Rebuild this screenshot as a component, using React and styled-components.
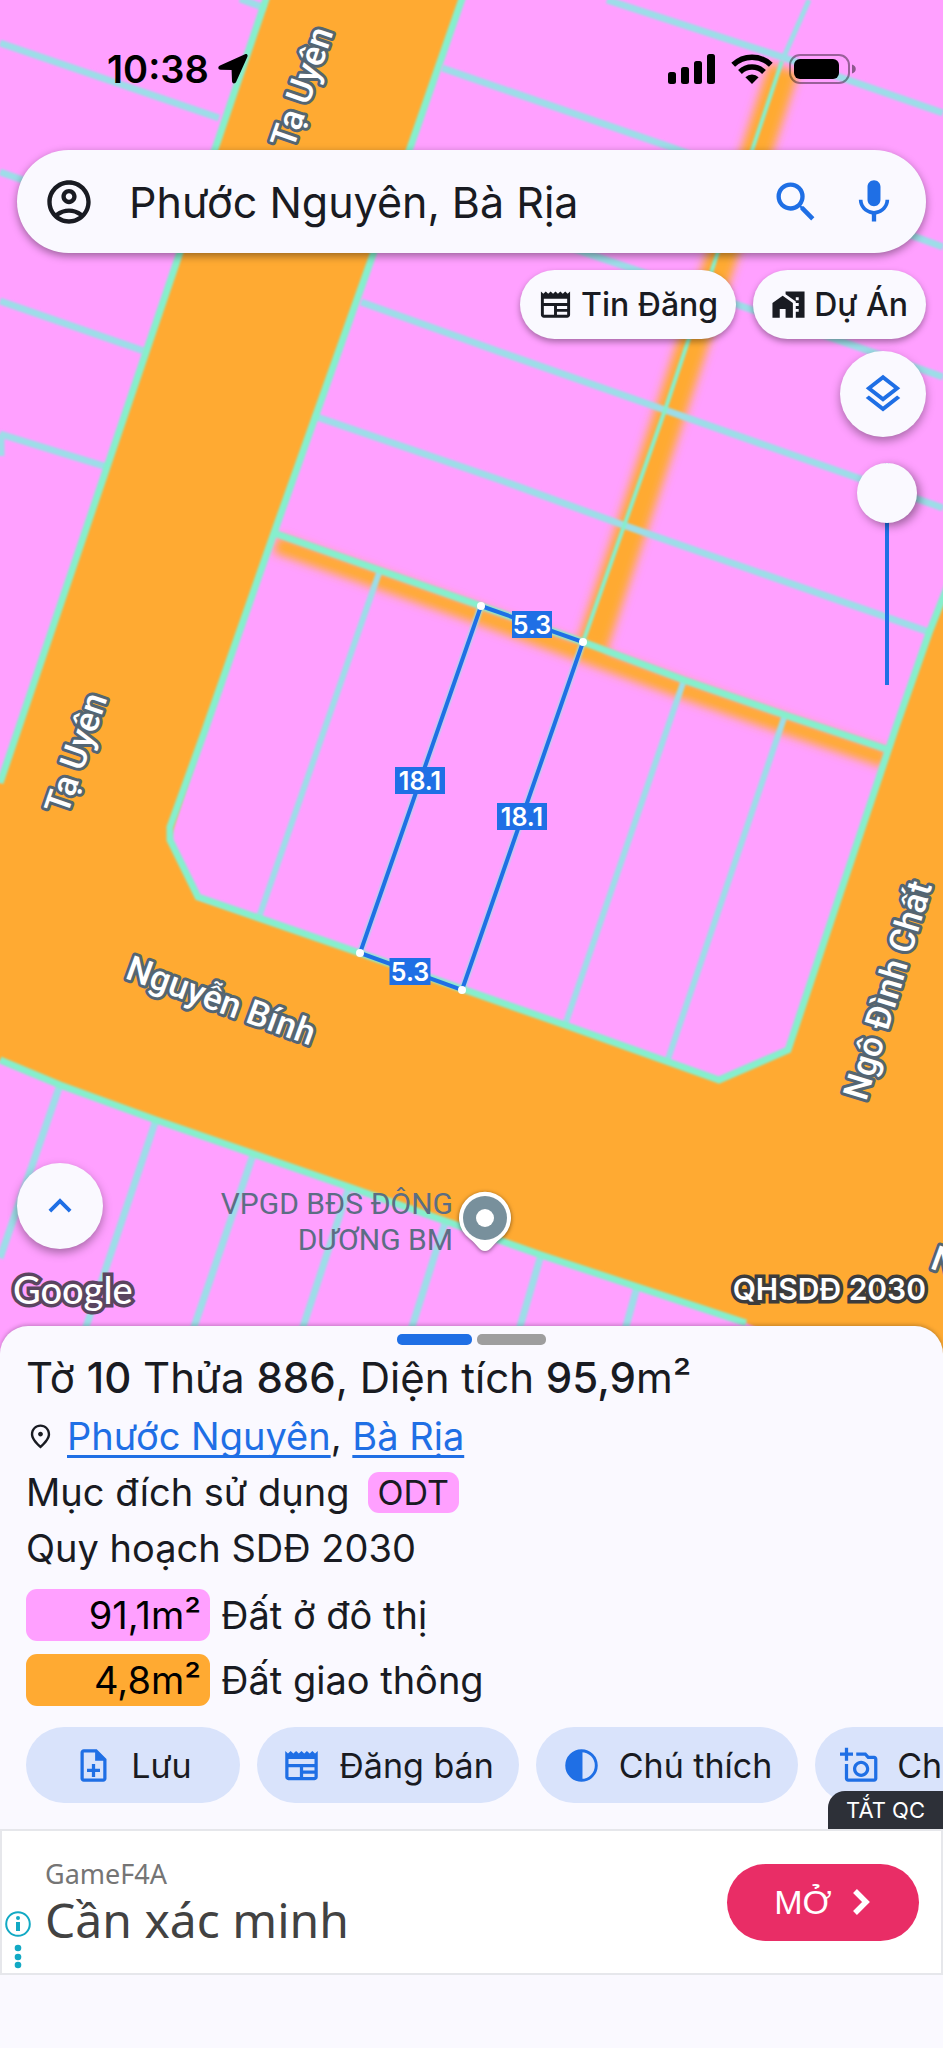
import React, { useState } from 'react';
import styled, { createGlobalStyle } from 'styled-components';
import {
  MdOutlineAccountCircle,
  MdSearch,
  MdMic,
  MdOutlineNewspaper,
  MdMapsHomeWork,
  MdOutlineLayers,
  MdKeyboardArrowUp,
  MdOutlinePlace,
  MdOutlineNoteAdd,
  MdOutlineAddAPhoto,
} from 'react-icons/md';

const colors = {
  surface: '#faf9ff',
  ink: '#191b22',
  blue: '#1f6fe5',
  pink: '#ffa0ff',
  orange: '#ffaa32',
  boundary: '#86efcd',
  parcel: '#9ddde8',
};

const GlobalStyle = createGlobalStyle`
  * {
    box-sizing: border-box;
  }

  body {
    margin: 0;
    background: ${colors.surface};
    color: ${colors.ink};
    font-family: Inter, 'Noto Sans', sans-serif;
    overflow-x: hidden;
  }

  button,
  input {
    font: inherit;
    color: inherit;
  }
`;

const Page = styled.div`
  display: flex;
  flex-direction: column;
  min-height: 100vh;
  overflow: hidden;
`;

/* Map */

const MapArea = styled.main`
  position: relative;
  flex: 1;
  display: flex;
  flex-direction: column;
  min-height: 1358px;
`;

const MapCanvas = styled.svg`
  position: absolute;
  inset: 0;
  width: 100%;
  height: 100%;
`;

const MapOverlay = styled.div`
  position: relative;
  flex: 1;
  display: flex;
  flex-direction: column;
  padding: 0 17px 44px;
`;

const StatusBar = styled.div`
  display: flex;
  align-items: center;
  justify-content: space-between;
  height: 138px;
  margin-bottom: 12px;
  padding: 0 69px 0 90px;
  color: #000;
`;

const StatusGroup = styled.div`
  display: flex;
  align-items: center;
  gap: ${({ $gap }) => $gap}px;
`;

const Clock = styled.span`
  font-size: 38px;
  font-weight: 600;
`;

const SearchBar = styled.form`
  display: flex;
  align-items: center;
  height: 103px;
  padding: 0 26px;
  border-radius: 52px;
  background: ${colors.surface};
  box-shadow: 0 3px 8px rgba(0, 0, 0, 0.4);
`;

const SearchInput = styled.input`
  flex: 1;
  min-width: 0;
  margin: 0 20px 0 34px;
  padding: 0;
  border: 0;
  outline: 0;
  background: transparent;
  font-size: 43px;
`;

const IconButton = styled.button`
  display: flex;
  padding: 0;
  border: 0;
  background: transparent;
  font-size: 52px;
  color: ${({ $blue }) => ($blue ? colors.blue : colors.ink)};

  & + & {
    margin-left: 26px;
  }
`;

const Chips = styled.div`
  display: flex;
  justify-content: flex-end;
  gap: 17px;
  margin: 17px 0 12px;
`;

const Chip = styled.button`
  display: flex;
  align-items: center;
  gap: 8px;
  height: 69px;
  padding: 0 18px;
  border: 0;
  border-radius: 35px;
  background: ${colors.surface};
  box-shadow: 0 3px 6px rgba(0, 0, 0, 0.35);
  font-size: 32px;
  font-weight: 500;

  svg {
    font-size: 35px;
  }
`;

const RoundButton = styled.button`
  display: flex;
  align-items: center;
  justify-content: center;
  width: 86px;
  height: 86px;
  padding: 0;
  border: 0;
  border-radius: 50%;
  background: ${colors.surface};
  box-shadow: 0 4px 10px rgba(0, 0, 0, 0.35);
  font-size: 46px;
  color: ${colors.blue};
`;

const MapTools = styled.div`
  display: flex;
  flex-direction: column;
  align-items: flex-end;
  gap: 26px;
`;

const OpacitySlider = styled.input`
  appearance: none;
  writing-mode: vertical-lr;
  direction: rtl;
  width: 60px;
  height: 222px;
  margin: 0 9px 0 0;
  background: linear-gradient(${colors.blue}, ${colors.blue}) center / 4px 100% no-repeat;

  &::-webkit-slider-thumb {
    appearance: none;
    width: 60px;
    height: 60px;
    border-radius: 50%;
    background: ${colors.surface};
    box-shadow: 3px 3px 10px rgba(0, 0, 0, 0.4);
  }
`;

const MapFooter = styled.div`
  margin-top: auto;
`;

const Attribution = styled.div`
  display: flex;
  align-items: center;
  justify-content: space-between;
  margin-top: 15px;
`;

const outline = (size, color) => `
  -webkit-text-stroke: ${size}px ${color};
  paint-order: stroke fill;
`;

const GoogleMark = styled.span`
  margin-left: -4px;
  color: #fff;
  font-family: Lato, sans-serif;
  font-size: 38px;
  font-weight: 500;
  line-height: 50px;
  ${outline(7, '#5a4560')}
`;

const LayerName = styled.span`
  color: #fff;
  font-size: 30px;
  font-weight: 600;
  ${outline(7, '#3c3c3c')}
`;

const StreetText = styled.text`
  fill: #fff;
  stroke: #546572;
  stroke-width: 6px;
  stroke-linejoin: round;
  paint-order: stroke;
  font-family: Roboto, sans-serif;
  font-size: 35px;
  font-weight: 500;
`;

const PlaceText = styled.text`
  fill: #5c6d84;
  font-family: Roboto, sans-serif;
  font-size: 30px;
  text-anchor: end;
`;

const LengthText = styled.text`
  fill: #fff;
  font-size: 25px;
  font-weight: 600;
  text-anchor: middle;
`;

/* Parcel sheet */

const Sheet = styled.section`
  position: relative;
  margin-top: -32px;
  padding: 8px 0 26px 26px;
  border-radius: 28px 28px 0 0;
  background: ${colors.surface};
  box-shadow: 0 -1px 4px rgba(0, 0, 0, 0.25);
`;

const Pager = styled.div`
  display: flex;
  justify-content: center;
  gap: 5px;
  margin: 0 0 3px -26px;
`;

const PagerDot = styled.span`
  width: ${({ $active }) => ($active ? 75 : 69)}px;
  height: 11px;
  border-radius: 5px;
  background: ${({ $active }) => ($active ? colors.blue : '#9e9e9e')};
`;

const Title = styled.h1`
  margin: 0;
  font-size: 42px;
  font-weight: 400;
  line-height: 60px;

  b {
    font-weight: 500;
  }
`;

const Line = styled.p`
  display: flex;
  align-items: center;
  margin: 0;
  font-size: 38px;
  line-height: 56px;
  white-space: pre;

  svg {
    margin-right: 12px;
    font-size: 29px;
  }
`;

const AreaLink = styled.a`
  color: ${colors.blue};
  text-decoration-thickness: 3px;
  text-underline-offset: 5px;
  text-decoration-skip-ink: none;
`;

const Badge = styled.span`
  margin-left: 18px;
  padding: 0 10px;
  border-radius: 11px;
  background: ${colors.pink};
  font-size: 34px;
  line-height: 41px;
`;

const LandUse = styled.dl`
  display: grid;
  grid-template-columns: 184px 1fr;
  gap: 13px 11px;
  margin: 13px 0 21px;
  font-size: 38px;
  line-height: 52px;
`;

const LandArea = styled.dt`
  padding-right: 9px;
  border-radius: 11px;
  background: ${({ $color }) => $color};
  color: #000;
  text-align: right;
`;

const LandName = styled.dd`
  margin: 0;
`;

const Actions = styled.div`
  display: flex;
  gap: 17px;
  overflow: hidden;
`;

const ActionButton = styled.button`
  flex: none;
  display: flex;
  align-items: center;
  justify-content: center;
  gap: 18px;
  width: ${({ $width }) => $width}px;
  height: 76px;
  padding: 0;
  border: 0;
  border-radius: 38px;
  background: #d9e3fb;
  font-size: 34px;

  svg {
    color: ${colors.blue};
    font-size: 39px;
  }
`;

/* Ad */

const AdBanner = styled.aside`
  position: relative;
  display: flex;
  align-items: center;
  height: 146px;
  margin-bottom: 73px;
  padding: 0 22px 0 3px;
  border: 2px solid #e6e7eb;
  background: #fff;
`;

const AdClose = styled.button`
  position: absolute;
  right: -2px;
  bottom: calc(100% + 2px);
  height: 38px;
  padding: 0 18px;
  border: 0;
  border-top-left-radius: 17px;
  background: #2d3038;
  color: #fff;
  font-size: 22px;
`;

const AdMarks = styled.svg`
  align-self: flex-end;
  width: 26px;
  height: 66px;
  margin-right: 14px;
`;

const AdText = styled.div`
  flex: 1;
  font-family: 'Noto Sans', sans-serif;
`;

const AdBrand = styled.div`
  color: #757575;
  font-size: 27px;
  line-height: 36px;
`;

const AdHeadline = styled.div`
  color: #424242;
  font-size: 48px;
  line-height: 56px;
`;

const AdAction = styled.button`
  display: flex;
  align-items: center;
  justify-content: center;
  gap: 20px;
  width: 192px;
  height: 77px;
  border: 0;
  border-radius: 39px;
  background: #e92d66;
  color: #fff;
  font-family: 'Liberation Sans', sans-serif;
  font-size: 34px;
`;

const streets = [
  { name: 'Tạ Uyên', x: 293, y: 150, angle: -71 },
  { name: 'Tạ Uyên', x: 67, y: 816, angle: -71 },
  { name: 'Nguyễn Bính', x: 124, y: 978, angle: 20 },
  { name: 'Ngô Đình Chất', x: 866, y: 1102, angle: -73 },
  { name: 'Nguyễn Bính', x: 929, y: 1268, angle: 20 },
];

const lengths = [
  { value: '5.3', x: 532, y: 625, width: 40 },
  { value: '18.1', x: 420, y: 781, width: 50 },
  { value: '18.1', x: 522, y: 817, width: 50 },
  { value: '5.3', x: 410, y: 972, width: 41 },
];

const corners = [
  [481, 606],
  [583, 642],
  [462, 990],
  [360, 953],
];

const CadastralMap = () => (
  <MapCanvas viewBox="0 0 943 1358" preserveAspectRatio="xMidYMin slice" role="img" aria-label="QHSDĐ 2030">
    <defs>
      <filter id="soft" x="-20%" y="-20%" width="140%" height="140%">
        <feGaussianBlur stdDeviation="5" />
      </filter>
      <filter id="fine">
        <feGaussianBlur stdDeviation="1" />
      </filter>
    </defs>
    <rect width="943" height="1358" fill={colors.pink} />
    {/* alleys between the lots */}
    <g fill="none" stroke={colors.orange} filter="url(#soft)">
      <path d="M784 68L671 410L592 646" strokeWidth="31" />
      <path d="M276 544L379 580L481 616L583 653L684 690L785 725L886 759" strokeWidth="18" />
    </g>
    {/* roads */}
    <g fill={colors.orange} filter="url(#fine)">
      <path
        d="M267 -4L107 467L0 783H-20V1053L60 1085L156 1120L349 1187L541 1255L746 1323L850 1368H963V550L929 633L896 727L839 897L788 1050L719 1080L565 1025L360 953L198 899L170 840L204 733L274 533L370 263L463 -4Z"
      />
    </g>
    {/* lot lines */}
    <g fill="none" stroke={colors.parcel} strokeWidth="7" filter="url(#fine)">
      <path d="M0 43L219 118M0 172L188 238M0 301L144 351M0 434L107 467M1 434V456M240 -1L265 8" />
      <path d="M607 0L782 57L943 113M442 68L673 148L943 247M410 192L586 253L747 308L943 377M361 302L500 352L665 410L943 508M314 416L500 480L623 525L929 632" />
      <path d="M380 570L259 917M481 606L360 953M583 642L462 990M684 680L565 1025M785 715L667 1062" strokeWidth="6" />
      <path d="M60 1085L0 1258M156 1120L85 1330M253 1155L193 1330M349 1187L302 1330M445 1223L411 1330M541 1255L519 1330M637 1287L625 1330" />
      <path d="M809 0L782 61" strokeWidth="5" />
    </g>
    <g fill="none" stroke={colors.boundary} strokeWidth="7" filter="url(#fine)">
      <path d="M267 -4L107 467L0 783" />
      <path d="M463 -4L370 263L274 533L204 733L170 827V840L198 897L360 953L565 1025L719 1080L788 1050L839 897L896 727L929 633L950 580" />
      <path d="M274 533L481 606L583 642L684 680L785 715L889 750" />
      <path d="M0 1060L60 1085L156 1120L349 1187L541 1255L746 1323" />
      <path d="M782 61L665 410L583 642" strokeWidth="4" />
    </g>
    <path
      d={`M${corners.map((point) => point.join(' ')).join('L')}Z`}
      fill="none"
      stroke={colors.blue}
      strokeWidth="4"
    />
    {corners.map(([x, y]) => (
      <circle key={x} cx={x} cy={y} r="4" fill="#fff" />
    ))}
    {lengths.map(({ value, x, y, width }) => (
      <g key={`${x}-${y}`}>
        <rect x={x - width / 2} y={y - 14} width={width} height="27" fill={colors.blue} />
        <LengthText x={x} y={y + 9}>
          {value}
        </LengthText>
      </g>
    ))}
    {streets.map(({ name, x, y, angle }) => (
      <StreetText key={`${x}-${y}`} transform={`translate(${x} ${y}) rotate(${angle})`}>
        {name}
      </StreetText>
    ))}
    <PlaceText x="453" y="1214">
      VPGD BĐS ĐÔNG
    </PlaceText>
    <PlaceText x="453" y="1250">
      DƯƠNG BM
    </PlaceText>
    <path
      d="M485 1251C479 1251 478 1245 470 1239A26 26 0 1 1 500 1239C492 1245 491 1251 485 1251Z"
      fill="#fff"
      style={{ filter: 'drop-shadow(0 1px 2px rgba(0, 0, 0, 0.5))' }}
    />
    <circle cx="485" cy="1218" r="22" fill="#78909c" />
    <circle cx="485" cy="1218" r="9" fill="#fff" />
  </MapCanvas>
);

const LocationArrow = () => (
  <svg width="30" height="32" viewBox="0 0 30 32" fill="currentColor">
    <path d="M27 1.2L2 12.5C-0.6 13.8 0 16.8 2.6 16.8L13.6 17L14 28C14 30.8 17 31.2 18.2 28.8L29.3 4C30.2 1.6 28.8 0.3 27 1.2Z" />
  </svg>
);

const SignalIcon = () => (
  <svg width="47" height="30" viewBox="0 0 47 30" fill="currentColor">
    <rect x="0" y="18" width="8" height="12" rx="2.5" />
    <rect x="13" y="13" width="8" height="17" rx="2.5" />
    <rect x="26" y="7" width="8" height="23" rx="2.5" />
    <rect x="39" y="0" width="8" height="30" rx="2.5" />
  </svg>
);

const WifiIcon = () => (
  <svg width="42" height="30" viewBox="0 0 42 30" fill="none" stroke="currentColor" strokeWidth="5.4">
    <path d="M2.2 10.8A27 27 0 0 1 39.8 10.8" />
    <path d="M9 18A17 17 0 0 1 33 18" />
    <path d="M21 30L14.4 23.3A9.4 9.4 0 0 1 27.6 23.3Z" fill="currentColor" stroke="none" />
  </svg>
);

const BatteryIcon = () => (
  <svg width="68" height="30" viewBox="0 0 68 30">
    <rect x="1" y="1" width="59" height="28" rx="10" fill="none" stroke="#000" strokeOpacity="0.4" strokeWidth="2" />
    <rect x="5" y="5" width="45" height="20" rx="6" fill="#000" />
    <path d="M63 10.5C68 12 68 18 63 19.5Z" fill="#000" fillOpacity="0.45" />
  </svg>
);

const HalfCircleIcon = () => (
  <svg width="39" height="39" viewBox="0 0 24 24">
    <circle cx="12" cy="12" r="9.1" fill="none" stroke="currentColor" strokeWidth="1.8" />
    <path d="M12.6 2.5V21.5H12A9.5 9.5 0 0 1 12 2.5Z" fill="currentColor" />
  </svg>
);

const actions = [
  { label: 'Lưu', width: 214, Icon: MdOutlineNoteAdd },
  { label: 'Đăng bán', width: 262, Icon: MdOutlineNewspaper },
  { label: 'Chú thích', width: 262, Icon: HalfCircleIcon },
  { label: 'Chụp ảnh', width: 262, Icon: MdOutlineAddAPhoto },
];

const App = () => {
  const [query, setQuery] = useState('Phước Nguyên, Bà Rịa');
  const [opacity, setOpacity] = useState(100);

  return (
    <>
      <GlobalStyle />
      <Page>
        <MapArea>
          <CadastralMap />
          <MapOverlay>
            <StatusBar>
              <StatusGroup $gap={9}>
                <Clock>10:38</Clock>
                <LocationArrow />
              </StatusGroup>
              <StatusGroup $gap={16}>
                <SignalIcon />
                <WifiIcon />
                <BatteryIcon />
              </StatusGroup>
            </StatusBar>
            <SearchBar onSubmit={(e) => e.preventDefault()}>
              <IconButton type="button" aria-label="Tài khoản">
                <MdOutlineAccountCircle />
              </IconButton>
              <SearchInput
                aria-label="Tìm kiếm"
                value={query}
                onChange={(e) => setQuery(e.target.value)}
              />
              <IconButton $blue type="submit" aria-label="Tìm">
                <MdSearch />
              </IconButton>
              <IconButton $blue type="button" aria-label="Giọng nói">
                <MdMic />
              </IconButton>
            </SearchBar>
            <Chips>
              <Chip>
                <MdOutlineNewspaper /> Tin Đăng
              </Chip>
              <Chip>
                <MdMapsHomeWork /> Dự Án
              </Chip>
            </Chips>
            <MapTools>
              <RoundButton aria-label="Lớp bản đồ">
                <MdOutlineLayers />
              </RoundButton>
              <OpacitySlider
                type="range"
                aria-label="Độ mờ"
                value={opacity}
                onChange={(e) => setOpacity(e.target.value)}
              />
            </MapTools>
            <MapFooter>
              <RoundButton aria-label="Mở rộng">
                <MdKeyboardArrowUp />
              </RoundButton>
              <Attribution>
                <GoogleMark>Google</GoogleMark>
                <LayerName>QHSDĐ 2030</LayerName>
              </Attribution>
            </MapFooter>
          </MapOverlay>
        </MapArea>
        <Sheet>
          <Pager>
            <PagerDot $active />
            <PagerDot />
          </Pager>
          <Title>
            Tờ <b>10</b> Thửa <b>886</b>, Diện tích <b>95,9</b>m²
          </Title>
          <Line>
            <MdOutlinePlace />
            <AreaLink href="#phuoc-nguyen">Phước Nguyên</AreaLink>
            {', '}
            <AreaLink href="#ba-ria">Bà Rịa</AreaLink>
          </Line>
          <Line>
            Mục đích sử dụng
            <Badge>ODT</Badge>
          </Line>
          <Line>Quy hoạch SDĐ 2030</Line>
          <LandUse>
            <LandArea $color={colors.pink}>91,1m²</LandArea>
            <LandName>Đất ở đô thị</LandName>
            <LandArea $color={colors.orange}>4,8m²</LandArea>
            <LandName>Đất giao thông</LandName>
          </LandUse>
          <Actions>
            {actions.map(({ label, width, Icon }) => (
              <ActionButton key={label} $width={width}>
                <Icon />
                {label}
              </ActionButton>
            ))}
          </Actions>
        </Sheet>
        <AdBanner>
          <AdClose>TẮT QC</AdClose>
          <AdMarks viewBox="0 0 26 66" fill="#12a9c4">
            <circle cx="13" cy="17" r="11.8" fill="none" stroke="#12a9c4" strokeWidth="2" />
            <circle cx="13" cy="11" r="2" />
            <rect x="11" y="15" width="4" height="9" />
            <circle cx="13" cy="41" r="3.3" />
            <circle cx="13" cy="50" r="3.3" />
            <circle cx="13" cy="58" r="3.3" />
          </AdMarks>
          <AdText>
            <AdBrand>GameF4A</AdBrand>
            <AdHeadline>Cần xác minh</AdHeadline>
          </AdText>
          <AdAction>
            MỞ
            <svg width="20" height="28" viewBox="0 0 20 28" fill="none" stroke="currentColor" strokeWidth="5.5">
              <path d="M3 3L14 14L3 25" />
            </svg>
          </AdAction>
        </AdBanner>
      </Page>
    </>
  );
};

export default App;
